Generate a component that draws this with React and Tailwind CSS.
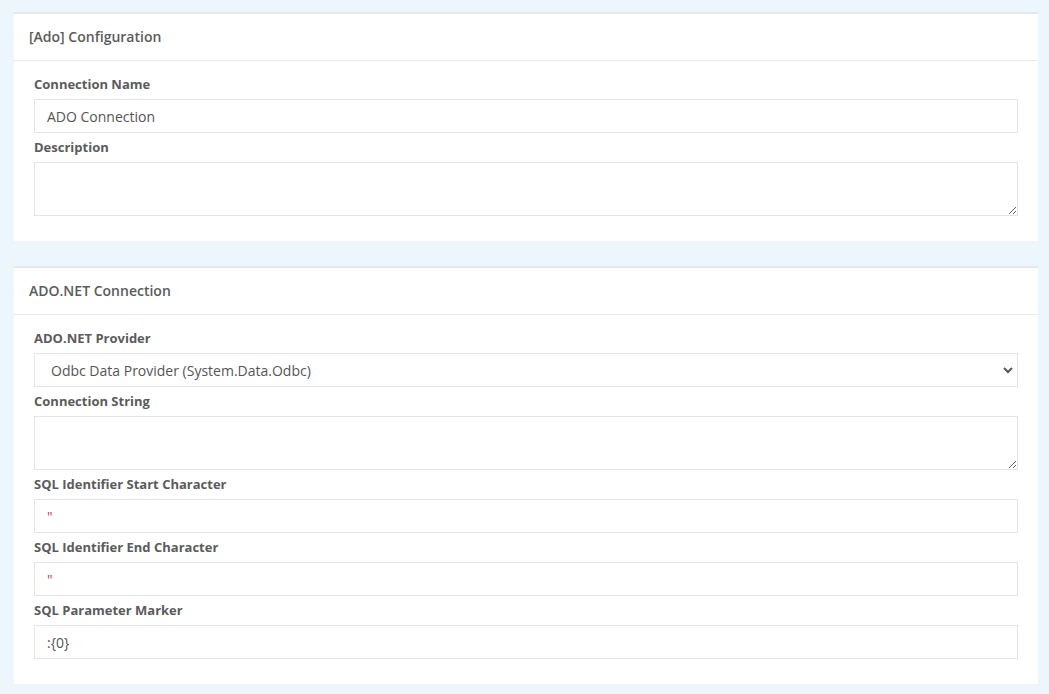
import React from "react"

function Label({ children }) {
  return <label className="block text-[13px] font-bold leading-[21px] text-[#5b5b5b] mb-1">{children}</label>
}

function Input({ value, red }) {
  return (
    <input
      readOnly
      value={value}
      className={`block w-full h-[34px] border border-[#e4e4e4] bg-white px-3 text-[14px] outline-none mb-1 ${red ? "text-[#b5474a]" : "text-[#555]"}`}
    />
  )
}

function Area() {
  return <textarea readOnly className="block w-full h-[54px] border border-[#e4e4e4] bg-white px-3 py-1 text-[14px] outline-none mb-1" />
}

function Card({ title, children }) {
  return (
    <div className="bg-white border-t-2 border-[#e5e8eb]">
      <div className="h-[47px] flex items-center px-[15px] pb-[2px] border-b border-[#e8e8e8] text-[14px] font-semibold text-[#5b5b5b]">
        {title}
      </div>
      <div className="px-5 pt-[13px] pb-[21px]">{children}</div>
    </div>
  )
}

export default function App() {
  return (
    <div className="min-h-[694px] bg-[#edf5fd] pt-3 pl-[14px] pr-[11px] pb-3 flex flex-col gap-[25px]" style={{ fontFamily: "'Open Sans', sans-serif" }}>
      <Card title="[Ado] Configuration">
        <Label>Connection Name</Label>
        <Input value="ADO Connection" />
        <Label>Description</Label>
        <Area />
      </Card>
      <Card title="ADO.NET Connection">
        <Label>ADO.NET Provider</Label>
        <div className="relative mb-1">
          <select className="block w-full h-[34px] appearance-none border border-[#e4e4e4] bg-white pl-4 pr-8 text-[14px] text-[#555] outline-none">
            <option>Odbc Data Provider (System.Data.Odbc)</option>
          </select>
          <svg className="absolute right-[5px] top-[13px]" width="10" height="8" viewBox="0 0 10 8">
            <path d="M1 2 L5 6 L9 2" fill="none" stroke="#555" strokeWidth="2" />
          </svg>
        </div>
        <Label>Connection String</Label>
        <Area />
        <Label>SQL Identifier Start Character</Label>
        <Input value={'"'} red />
        <Label>SQL Identifier End Character</Label>
        <Input value={'"'} red />
        <Label>SQL Parameter Marker</Label>
        <Input value=":{0}" />
      </Card>
    </div>
  )
}
